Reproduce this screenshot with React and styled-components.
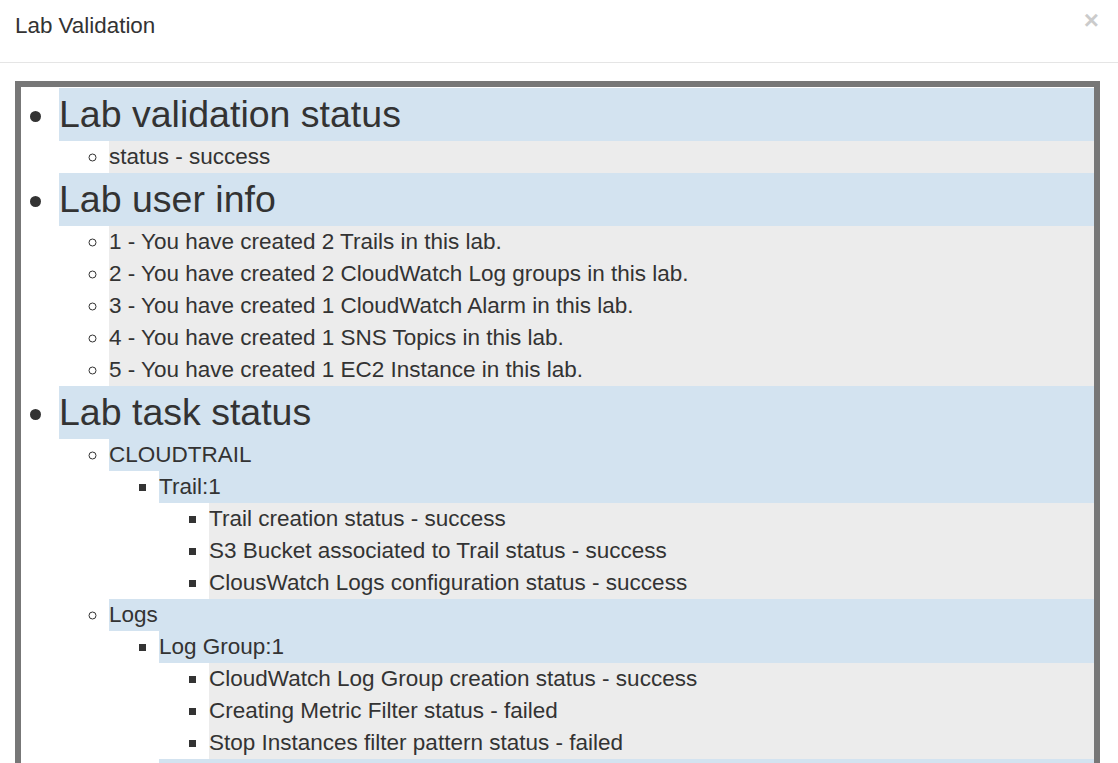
import React from "react";
import styled, { createGlobalStyle } from "styled-components";

const Global = createGlobalStyle`
  html, body { margin: 0; padding: 0; background: #fff; overflow: hidden; }
  body { font-family: "Liberation Sans", Arial, sans-serif; color: #333; }
`;

const Modal = styled.div`
  width: 1118px;
  height: 763px;
  overflow: hidden;
  background: #fff;
`;

const Header = styled.div`
  position: relative;
  height: 52px;
  padding: 10px 15px 0;
  border-bottom: 1px solid #e5e5e5;
`;

const Title = styled.h4`
  margin: 0;
  font-size: 22.4px;
  font-weight: normal;
  line-height: 32px;
  color: #333;
`;

const Close = styled.button`
  position: absolute;
  top: 3px;
  right: 19px;
  padding: 0;
  border: 0;
  background: transparent;
  font-family: "Liberation Sans", Arial, sans-serif;
  font-size: 26px;
  font-weight: bold;
  line-height: 34px;
  color: #000;
  opacity: 0.2;
  cursor: pointer;
`;

const Body = styled.div`
  padding: 18px 18px 0 15px;
`;

const Box = styled.div`
  border: 6px solid #777;
  padding-top: 1px;
`;

const TopList = styled.ul`
  margin: 0;
  padding-left: 38px;
  list-style: disc;
`;

const SubList = styled.ul`
  margin: 0;
  padding-left: 50px;
  list-style: ${(p) => p.$type};
  font-size: 22.5px;
  line-height: 32px;
`;

const TopItem = styled.li`
  font-size: 37.5px;
  line-height: 53px;
`;

const Item = styled.li`
  background: ${(p) => (p.$leaf ? "#ececec" : "transparent")};
`;

const KeyLabel = styled.div`
  background: #d3e3f0;
`;

const data = [
  ["Lab validation status", [["status - success"]]],
  [
    "Lab user info",
    [
      ["1 - You have created 2 Trails in this lab."],
      ["2 - You have created 2 CloudWatch Log groups in this lab."],
      ["3 - You have created 1 CloudWatch Alarm in this lab."],
      ["4 - You have created 1 SNS Topics in this lab."],
      ["5 - You have created 1 EC2 Instance in this lab."],
    ],
  ],
  [
    "Lab task status",
    [
      [
        "CLOUDTRAIL",
        [
          [
            "Trail:1",
            [
              ["Trail creation status - success"],
              ["S3 Bucket associated to Trail status - success"],
              ["ClousWatch Logs configuration status - success"],
            ],
          ],
        ],
      ],
      [
        "Logs",
        [
          [
            "Log Group:1",
            [
              ["CloudWatch Log Group creation status - success"],
              ["Creating Metric Filter status - failed"],
              ["Stop Instances filter pattern status - failed"],
            ],
          ],
          [
            "Log Group:2",
            [
              ["CloudWatch Log Group creation status - success"],
              ["Creating Metric Filter status - failed"],
            ],
          ],
        ],
      ],
    ],
  ],
];

const types = ["circle", "square", "square", "square"];

function Node({ node, depth }) {
  const [label, children] = node;
  if (!children) return <Item $leaf>{label}</Item>;
  return (
    <Item>
      <KeyLabel>{label}</KeyLabel>
      <SubList $type={types[depth + 1] || "square"}>
        {children.map((c, i) => (
          <Node key={i} node={c} depth={depth + 1} />
        ))}
      </SubList>
    </Item>
  );
}

export default function App() {
  return (
    <Modal>
      <Global />
      <Header>
        <Title>Lab Validation</Title>
        <Close aria-label="Close">×</Close>
      </Header>
      <Body>
        <Box>
          <TopList>
            {data.map(([label, children], i) => (
              <TopItem key={i}>
                <KeyLabel>{label}</KeyLabel>
                <SubList $type="circle">
                  {children.map((c, j) => (
                    <Node key={j} node={c} depth={0} />
                  ))}
                </SubList>
              </TopItem>
            ))}
          </TopList>
        </Box>
      </Body>
    </Modal>
  );
}
